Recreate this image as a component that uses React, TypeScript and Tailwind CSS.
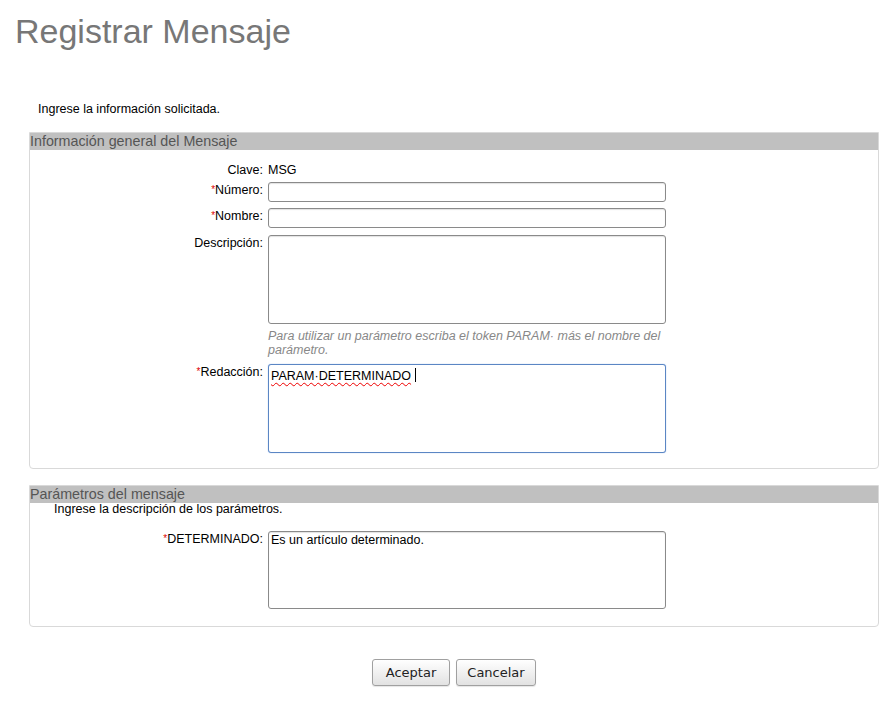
const labelCls = "text-right text-[12.5px] leading-[14px] text-black pt-[1px]";
const inputCls =
  "h-[20px] w-[398px] rounded-[3px] border border-[#8a8a8a] bg-white shadow-[inset_0_1px_1px_rgba(0,0,0,0.12)]";

function Req({ children }: { children: React.ReactNode }) {
  return (
    <span>
      <span className="text-[#d00] text-[10px] align-top">*</span>
      {children}
    </span>
  );
}

function Section({ title, children }: { title: string; children: React.ReactNode }) {
  return (
    <div className="rounded-b-[4px] border border-[#d9d9d9] bg-white">
      <div className="h-[17px] bg-[#c0c0c0] text-[14.3px] leading-[17px] text-[#555]">{title}</div>
      {children}
    </div>
  );
}

export default function App() {
  return (
    <div className="min-h-[716px] w-[880px] bg-white font-['Liberation_Sans',Arial,sans-serif]">
      <h1 className="ml-[15px] pt-[14px] text-[34px] leading-[34px] text-[#777]">Registrar Mensaje</h1>

      <div className="ml-[29px] w-[850px]">
        <p className="mt-[54px] ml-[9px] text-[12.5px] leading-[14px] text-black">
          Ingrese la información solicitada.
        </p>

        <div className="mt-[16px]">
          <Section title="Información general del Mensaje">
            <div className="grid grid-cols-[233px_398px] gap-x-[5px] pt-[13px] pb-[15px]">
              <div className="text-right text-[12.5px] leading-[14px]">Clave:</div>
              <div className="text-[12.5px] leading-[14px]">MSG</div>

              <div className={labelCls + " mt-[5px]"}>
                <Req>Número:</Req>
              </div>
              <div className={inputCls + " mt-[5px]"} />

              <div className={labelCls + " mt-[6px]"}>
                <Req>Nombre:</Req>
              </div>
              <div className={inputCls + " mt-[6px]"} />

              <div className={labelCls + " mt-[7px]"}>Descripción:</div>
              <div className="mt-[7px] h-[89px] w-[398px] rounded-[3px] border border-[#8a8a8a] bg-white shadow-[inset_0_1px_1px_rgba(0,0,0,0.12)]" />

              <div />
              <p className="mt-[5px] text-[12.5px] italic leading-[14px] text-[#888]">
                Para utilizar un parámetro escriba el token PARAM· más el nombre del parámetro.
              </p>

              <div className={labelCls + " mt-[7px]"}>
                <Req>Redacción:</Req>
              </div>
              <div className="mt-[7px] h-[89px] w-[398px] rounded-[3px] border border-[#5b86c4] bg-white px-[2px] pt-[1px] text-[12.5px] leading-[15px] shadow-[0_0_1px_#7aa3e0]">
                <span className="underline decoration-wavy decoration-[#e00] decoration-1 underline-offset-2">
                  PARAM·DETERMINADO
                </span>
                <span className="ml-[4px] inline-block h-[14px] w-px translate-y-[2px] bg-black" />
              </div>
            </div>
          </Section>
        </div>

        <div className="mt-[16px]">
          <Section title="Parámetros del mensaje">
            <p className="pl-[24px] text-[12.5px] leading-[13px] text-black">
              Ingrese la descripción de los parámetros.
            </p>
            <div className="grid grid-cols-[233px_398px] gap-x-[5px] pt-[15px] pb-[17px]">
              <div className={labelCls}>
                <Req>DETERMINADO:</Req>
              </div>
              <div className="h-[78px] w-[398px] rounded-[3px] border border-[#8a8a8a] bg-white px-[2px] pt-[1px] text-[12.5px] leading-[15px] shadow-[inset_0_1px_1px_rgba(0,0,0,0.12)]">
                Es un artículo determinado.
              </div>
            </div>
          </Section>
        </div>

        <div className="mt-[32px] flex justify-center gap-[6px]">
          <button className="h-[27px] w-[78px] rounded-[3px] border border-[#a0a0a0] bg-gradient-to-b from-white to-[#e2e2e2] font-['DejaVu_Sans',sans-serif] text-[13px] text-[#222] shadow-[0_1px_1px_rgba(0,0,0,0.1)]">
            Aceptar
          </button>
          <button className="h-[27px] w-[80px] rounded-[3px] border border-[#a0a0a0] bg-gradient-to-b from-white to-[#e2e2e2] font-['DejaVu_Sans',sans-serif] text-[13px] text-[#222] shadow-[0_1px_1px_rgba(0,0,0,0.1)]">
            Cancelar
          </button>
        </div>
      </div>
    </div>
  );
}
